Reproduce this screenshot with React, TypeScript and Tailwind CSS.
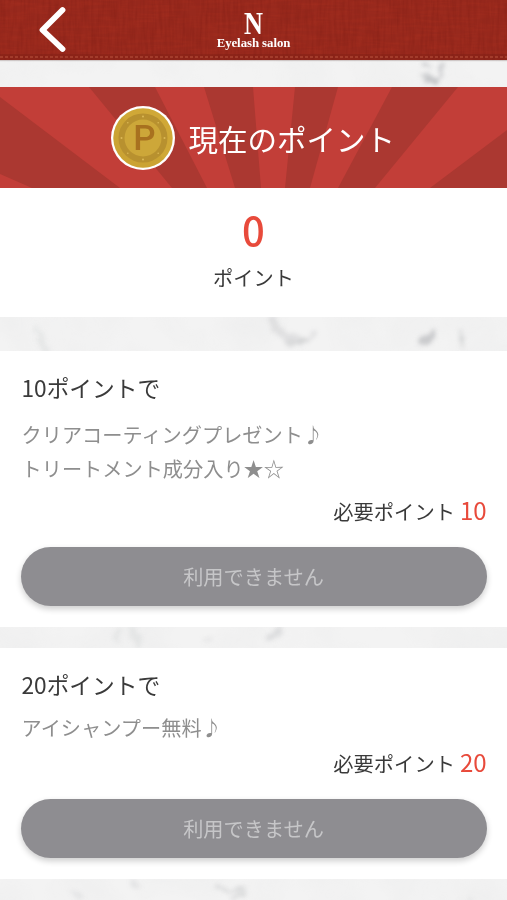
import React from "react";

type Reward = { points: number; lines: string[]; className: string; titleClass: string };

const rewards: Reward[] = [
  {
    points: 10,
    lines: ["クリアコーティングプレゼント♪", "トリートメント成分入り★☆"],
    className: "mt-[34px] h-[276px]",
    titleClass: "mb-[14px]",
  },
  {
    points: 20,
    lines: ["アイシャンプー無料♪"],
    className: "mt-[21px] h-[231px]",
    titleClass: "mb-[10px]",
  },
];

function Marble() {
  return (
    <svg className="absolute inset-0 -z-10" width="507" height="900" aria-hidden="true">
      <defs>
        <filter id="vein" x="0" y="0" width="507" height="900" filterUnits="userSpaceOnUse">
          <feTurbulence type="fractalNoise" baseFrequency="0.12" numOctaves="3" seed="4" result="n" />
          <feDisplacementMap in="SourceGraphic" in2="n" scale="10" xChannelSelector="R" yChannelSelector="G" />
          <feGaussianBlur stdDeviation="2" />
        </filter>
        <filter id="cloud">
          <feTurbulence type="fractalNoise" baseFrequency="0.018" numOctaves="3" seed="5" />
          <feColorMatrix values="0 0 0 0 .65  0 0 0 0 .66  0 0 0 0 .67  .5 0 0 0 -.18" />
        </filter>
      </defs>
      <rect width="507" height="900" fill="#f3f3f3" />
      <rect width="507" height="900" filter="url(#cloud)" opacity=".5" />
      <g filter="url(#vein)" fill="none" stroke="#b5b7ba" strokeLinecap="round">
        <path d="M424 63 L428 68 M441 66 L442 75 L434 81 L426 81" strokeWidth="3.5" opacity=".7" />
        <path d="M421 76 L436 79" strokeWidth="6" opacity=".6" />
        <path d="M272 318 L278 332 L292 338 L306 341 L314 332" strokeWidth="6" opacity=".3" />
        <path d="M287 342 L306 342" strokeWidth="4" opacity=".4" />
        <path d="M422 342 L427 340 L433 334" strokeWidth="7" opacity=".65" />
        <path d="M461 331 L463 348" strokeWidth="2.5" opacity=".5" />
        <path d="M37 329 L46 350" strokeWidth="6" opacity=".2" />
        <path d="M116 638 L118 633 M132 630 L139 644" strokeWidth="7" opacity=".2" />
        <path d="M206 638 L211 640" strokeWidth="3" opacity=".3" />
        <path d="M270 638 L280 630" strokeWidth="6" opacity=".35" />
        <path d="M219 886 L230 892 L242 889 M232 899 L244 893" strokeWidth="4" opacity=".4" />
        <path d="M132 881 L138 887 M72 892 L79 898" strokeWidth="4" opacity=".25" />
        <path d="M435 902 L470 902" strokeWidth="4" opacity=".4" />
      </g>
    </svg>
  );
}

function Header() {
  return (
    <header className="relative isolate flex h-[60px] shrink-0 justify-center overflow-hidden bg-[#98291d] shadow-[0_1px_1px_#8b767355]">
      <svg className="absolute inset-0 -z-10" width="507" height="60" aria-hidden="true">
        <defs>
          <filter id="linen" colorInterpolationFilters="sRGB">
            <feTurbulence type="fractalNoise" baseFrequency="0.04 0.35" numOctaves="2" seed="3" />
            <feColorMatrix values="0 0 0 0 .7  0 0 0 0 .2  0 0 0 0 .13  1.2 0 0 0 -.45" />
          </filter>
          <filter id="weave" colorInterpolationFilters="sRGB">
            <feTurbulence type="fractalNoise" baseFrequency="0.35 0.04" numOctaves="2" seed="8" />
            <feColorMatrix values="0 0 0 0 .4  0 0 0 0 .06  0 0 0 0 .04  1.2 0 0 0 -.45" />
          </filter>
        </defs>
        <rect width="507" height="60" filter="url(#linen)" opacity=".5" />
        <rect width="507" height="60" filter="url(#weave)" opacity=".3" />
        <rect y="54" width="507" height="6" fill="#7d1d14" opacity=".4" />
        <path d="M0 57H507" stroke="#b9543f" strokeWidth="1" strokeDasharray="3 2" />
      </svg>
      <button aria-label="戻る" className="absolute top-[6px] left-[38px]">
        <svg
          width="30"
          height="48"
          viewBox="0 0 30 48"
          fill="none"
          stroke="white"
          strokeWidth="5.8"
          strokeLinejoin="round"
          strokeLinecap="round"
        >
          <path d="M24.5 4 L4.5 24 L24.5 43" />
        </svg>
      </button>
      <div className="flex flex-col items-center pt-[11px] font-['Liberation_Serif',serif] font-bold text-white">
        <span className="h-[25px] scale-x-[0.82] text-[32px] leading-[25px]">N</span>
        <span className="text-[12.8px] leading-[15px] tracking-[-0.05px] whitespace-nowrap">Eyelash salon</span>
      </div>
    </header>
  );
}

function Coin() {
  return (
    <svg width="64" height="64" viewBox="0 0 64 64" className="shrink-0" aria-hidden="true">
      <circle cx="32" cy="32" r="32" fill="#fff" />
      <circle cx="32" cy="32" r="29.7" fill="#d0a837" />
      <path d="M11 11 A29.7 29.7 0 0 0 53 53 Z" fill="#c49a2e" opacity=".35" />
      <circle cx="32" cy="32" r="24.5" fill="#b8912f" />
      <circle cx="32" cy="32" r="18.5" fill="#cda739" />
      <g fill="#dcb957">
        <circle cx="32" cy="10.5" r="1" />
        <circle cx="32" cy="53.5" r="1" />
        <circle cx="10.5" cy="32" r="1" />
        <circle cx="53.5" cy="32" r="1" />
        <circle cx="16.8" cy="16.8" r=".8" />
        <circle cx="47.2" cy="16.8" r=".8" />
        <circle cx="16.8" cy="47.2" r=".8" />
        <circle cx="47.2" cy="47.2" r=".8" />
      </g>
      <text
        x="33.5"
        y="43.6"
        textAnchor="middle"
        fill="#a8711f"
        className="font-['Roboto',sans-serif] text-[35px] font-medium"
      >
        P
      </text>
    </svg>
  );
}

function PointsBanner() {
  return (
    <div className="relative isolate flex h-[101px] items-center gap-[13.5px] bg-[#c23e38] pl-[111px]">
      <svg className="absolute inset-0 -z-10" width="507" height="101" fill="#ab3831" aria-hidden="true">
        <path d="M0 10 L120 101 H32 L0 87Z" />
        <path d="M89 0 H155 L207 101 H172Z" />
        <path d="M204 0 H253 L261 101 H235Z" />
        <path d="M295 0 H338 L310 101 H285Z" />
        <path d="M392 0 H458 L375 101 H338Z" />
        <path d="M507 43 L430 101 H507Z" />
      </svg>
      <Coin />
      <h1 className="text-[29.5px] leading-[44px] whitespace-nowrap text-white">現在のポイント</h1>
    </div>
  );
}

function RewardCard({ reward }: { reward: Reward }) {
  return (
    <section className={"flex flex-col bg-white px-[21px] pt-[21px] pb-[21px] " + reward.className}>
      <h2 className={"pl-[0.5px] text-[22.7px] leading-[32px] text-[#3a3a3a] " + reward.titleClass}>
        {reward.points}ポイントで
      </h2>
      <div className="pl-[0.5px] text-[20.2px] leading-[34px] text-[#8e8e8e]">
        {reward.lines.map((line) => (
          <p key={line}>{line}</p>
        ))}
      </div>
      <div className="-mr-[0.6px] mt-auto mb-[20px] flex items-baseline justify-end gap-[5px] text-[20.3px] leading-[32px] text-[#3a3a3a]">
        <span>必要ポイント</span>
        <span className="text-[24px] text-[#e84a3b]">{reward.points}</span>
      </div>
      <button
        disabled
        className="-mr-px h-[59px] shrink-0 rounded-full bg-[#8e8d91] pt-[2px] pr-px text-[20.2px] text-[#c6c6c8] shadow-[0_3px_6px_rgba(0,0,0,0.2)]"
      >
        利用できません
      </button>
    </section>
  );
}

export default function App() {
  return (
    <div
      lang="ja"
      className="relative isolate flex h-[900px] w-[507px] flex-col overflow-hidden font-['Noto_Sans_CJK_JP',sans-serif]"
    >
      <Marble />
      <Header />
      <main className="flex flex-col pt-[27px]">
        <PointsBanner />
        <section className="flex h-[129px] flex-col items-center bg-white pt-[18px]">
          <p className="text-[40px] leading-[46px] font-medium text-[#e84a3b]">0</p>
          <p className="mt-[11px] text-[20.2px] leading-[30px] text-[#3a3a3a]">ポイント</p>
        </section>
        {rewards.map((reward) => (
          <RewardCard key={reward.points} reward={reward} />
        ))}
      </main>
    </div>
  );
}
